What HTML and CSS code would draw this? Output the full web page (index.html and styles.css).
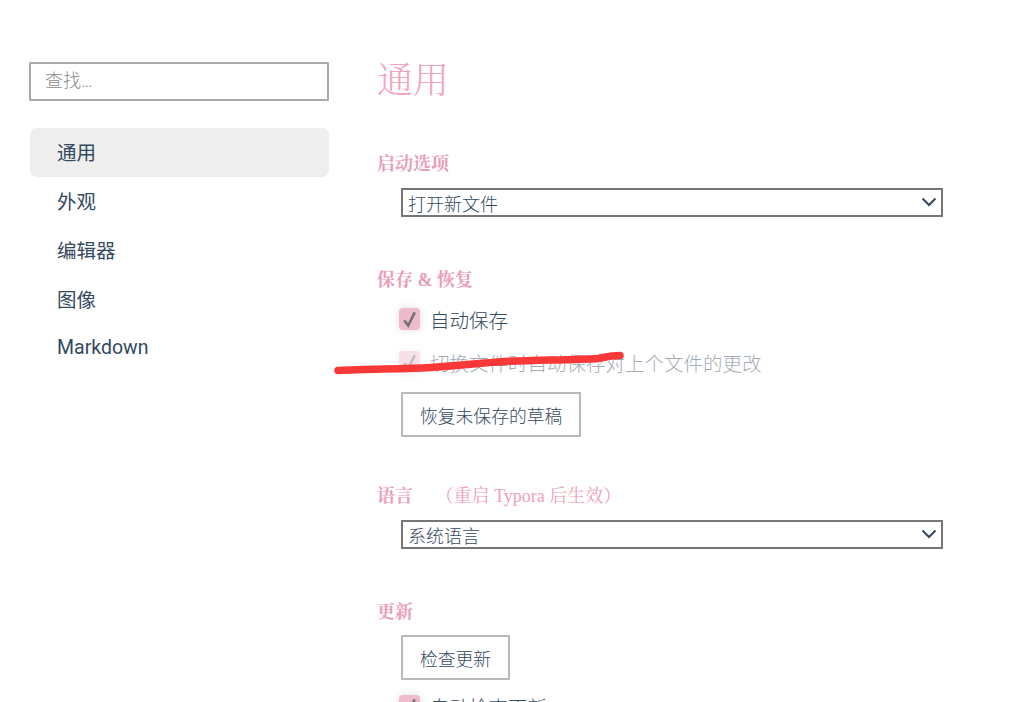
FILE: index.html
```html
<!DOCTYPE html>
<html lang="zh-CN">
<head>
    <meta charset="UTF-8">
    <meta name="viewport" content="width=device-width, initial-scale=1.0">
    <title>偏好设置</title>
    <link rel="stylesheet" href="styles.css">
</head>
<body>

    <div class="window">
        <aside class="sidebar">
            <input type="text" class="search" placeholder="查找…">
            <nav class="nav">
                <a class="nav-item active">通用</a>
                <a class="nav-item">外观</a>
                <a class="nav-item">编辑器</a>
                <a class="nav-item">图像</a>
                <a class="nav-item">Markdown</a>
            </nav>
        </aside>

        <main class="content">
            <h1 class="page-title">通用</h1>

            <section class="group group-start">
                <h2 class="group-title">启动选项</h2>
                <select class="picker">
                    <option>打开新文件</option>
                </select>
            </section>

            <section class="group group-save">
                <h2 class="group-title">保存 &amp; 恢复</h2>
                <label class="check-row">
                    <span class="check"><svg viewBox="0 0 16 16"><path d="M4 9l3 4 5-10"/></svg></span>
                    <span>自动保存</span>
                </label>
                <label class="check-row disabled">
                    <span class="check"><svg viewBox="0 0 16 16"><path d="M4 9l3 4 5-10"/></svg></span>
                    <span>切换文件时自动保存对上个文件的更改</span>
                </label>
                <button class="btn">恢复未保存的草稿</button>
            </section>

            <section class="group group-lang">
                <h2 class="group-title">语言 <small class="hint">（重启 Typora 后生效）</small></h2>
                <select class="picker">
                    <option>系统语言</option>
                </select>
            </section>

            <section class="group group-update">
                <h2 class="group-title">更新</h2>
                <button class="btn">检查更新</button>
                <label class="check-row">
                    <span class="check"><svg viewBox="0 0 16 16"><path d="M4 9l3 4 5-10"/></svg></span>
                    <span>自动检查更新</span>
                </label>
            </section>
        </main>

        <!-- red marker stroke drawn over the screenshot -->
        <svg class="scribble" viewBox="0 0 1030 702">
            <path d="M338 370.5C370 369 405 369 430 367.5C455 366 480 363 505 361.5C540 360 575 360 598 358.5C606 357 610 355.5 620 355.5"/>
        </svg>
    </div>

</body>
</html>
```

FILE: styles.css
```css
* { box-sizing: border-box; }

html, body {
    margin: 0;
    height: 702px;
    overflow: hidden;
    background: #fff;
}

body {
    color: #34495e;
    font-family: Roboto, "Noto Sans CJK SC", sans-serif;
    font-size: 19.5px;
    font-weight: 300;
}

.window {
    position: relative;
    display: flex;
    height: 702px;
    overflow: hidden;
    padding-left: 29px;
}

.sidebar {
    width: 300px;
    flex: none;
    padding-top: 62px;
}

.search {
    display: block;
    width: 100%;
    height: 39px;
    padding: 0 14px 3px;
    border: 2px solid #a9a9a9;
    border-radius: 1px;
    outline: none;
    font-family: inherit;
    font-size: 18px;
    font-weight: 300;
    color: #34495e;
}

.search::placeholder { color: #8a8a8a; opacity: 1; }

.nav {
    display: flex;
    flex-direction: column;
    margin-top: 27px;
    margin-left: 1px;
}

.nav-item {
    display: flex;
    align-items: center;
    height: 49px;
    padding-left: 27px;
    padding-bottom: 3px;
    border-radius: 7px;
    font-weight: 400;
}

.nav-item.active { background: #eee; }

.content {
    flex: 1;
    padding-left: 48px;
}

.page-title {
    margin: 59px 0 0;
    height: 44px;
    line-height: 44px;
    font-family: "Liberation Serif", "Noto Serif CJK SC", "Noto Sans CJK SC", serif;
    font-size: 36px;
    font-weight: 300;
    color: #f0a6bd;
}

.group { padding-left: 24px; }

.group-start { margin-top: 48px; }
.group-save { margin-top: 50px; }
.group-lang { margin-top: 46px; }
.group-update { margin-top: 50px; }

.group-title {
    margin: 0 0 0 -24px;
    height: 26px;
    line-height: 26px;
    font-family: "Liberation Serif", "Noto Serif CJK SC", "Noto Sans CJK SC", serif;
    font-size: 18px;
    font-weight: 700;
    color: #ea9db6;
}

.hint {
    margin-left: 18px;
    font-size: 18px;
    font-weight: 400;
    color: #ef9fb8;
}

.picker {
    display: block;
    appearance: none;
    width: 542px;
    height: 29px;
    margin-top: 11px;
    padding: 3px 0 0 5px;
    border: 2px solid #767676;
    border-radius: 0;
    outline: none;
    background: #fff url("data:image/svg+xml,%3Csvg xmlns='http://www.w3.org/2000/svg' width='16' height='10'%3E%3Cpath d='M1.5 1.5L8 8l6.5-6.5' fill='none' stroke='%2334495e' stroke-width='2'/%3E%3C/svg%3E") no-repeat right 4px top 7px;
    font-family: inherit;
    font-size: 18px;
    font-weight: 300;
    color: #34495e;
}

.check-row {
    display: flex;
    align-items: center;
    gap: 10px;
    height: 43px;
    margin-left: -2px;
}

.group-title + .check-row { margin-top: 5px; }

.check {
    position: relative;
    width: 21px;
    height: 22px;
    flex: none;
    margin-top: -2px;
    border-radius: 4px;
    background: #eebbcc;
    box-shadow: 0 0 8px rgba(0, 0, 0, 0.12);
}

.check svg {
    display: block;
    width: 100%;
    height: 100%;
    fill: none;
    stroke: #757575;
    stroke-width: 2;
}

.disabled { opacity: 0.45; }

.btn {
    display: block;
    height: 45px;
    margin-top: 8px;
    padding: 0 17px;
    border: 2px solid #b9b9b9;
    background: #fff;
    font-family: inherit;
    font-size: 17.8px;
    font-weight: 300;
    color: #34495e;
}

.group-update .btn { margin-top: 10px; }
.btn + .check-row { margin-top: 5px; }

.scribble {
    position: absolute;
    left: 0;
    top: 0;
    width: 1030px;
    height: 702px;
    pointer-events: none;
}

.scribble path {
    fill: none;
    stroke: #fb3838;
    stroke-width: 7.5;
    stroke-linecap: round;
    stroke-linejoin: round;
}
```
